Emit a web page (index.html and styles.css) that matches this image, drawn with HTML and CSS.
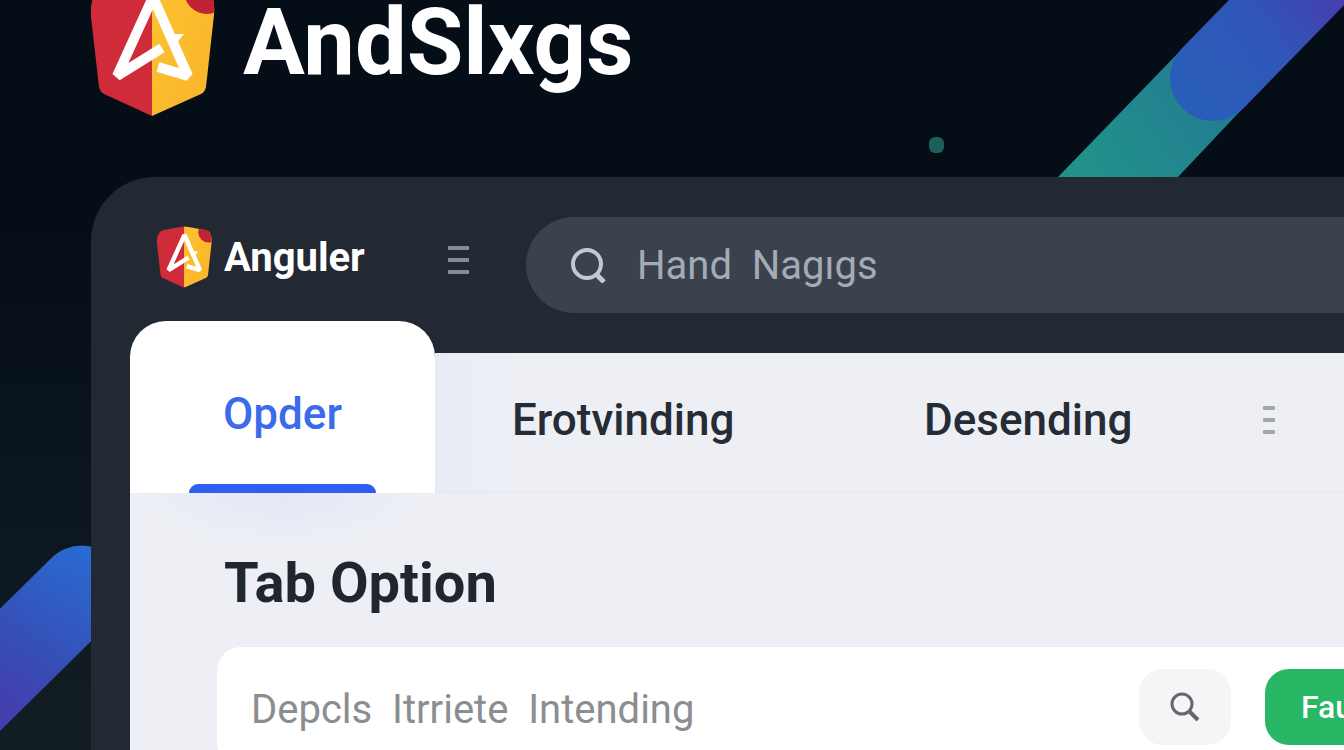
FILE: index.html
```html
<!DOCTYPE html>
<html lang="en">
<head>
  <meta charset="UTF-8" />
  <meta name="viewport" content="width=device-width, initial-scale=1" />
  <title>AndSlxgs</title>
  <link rel="stylesheet" href="styles.css">
</head>
<body>

  <!-- background ribbons -->
  <svg class="ribbons" viewBox="0 0 1344 750" preserveAspectRatio="xMidYMin slice" aria-hidden="true">
    <defs>
      <linearGradient id="teal" gradientUnits="userSpaceOnUse" x1="1090" y1="177" x2="1220" y2="90">
        <stop offset="0" stop-color="#21918a" />
        <stop offset="1" stop-color="#237c92" />
      </linearGradient>
      <linearGradient id="violet" gradientUnits="userSpaceOnUse" x1="1200" y1="100" x2="1345" y2="-10">
        <stop offset="0" stop-color="#2a5dba" />
        <stop offset="0.5" stop-color="#3056b8" />
        <stop offset="1" stop-color="#473cae" />
      </linearGradient>
      <linearGradient id="blue" gradientUnits="userSpaceOnUse" x1="90" y1="560" x2="0" y2="700">
        <stop offset="0" stop-color="#2a69cf" />
        <stop offset="0.6" stop-color="#3550b8" />
        <stop offset="1" stop-color="#433fae" />
      </linearGradient>
    </defs>
    <path d="M1010 227 L1058 177 L1183 48 L1243 108 L1178 177 L1130 227 Z" fill="url(#teal)" />
    <path d="M1213 78 L1363 -76" stroke="url(#violet)" stroke-width="86" stroke-linecap="round" />
    <path d="M82 589 L-60 729" stroke="url(#blue)" stroke-width="87" stroke-linecap="round" />
    <rect x="929" y="137" width="15" height="16" rx="6" fill="#1c5f5b" />
  </svg>

  <!-- shield logo, used twice -->
  <svg class="sprite" aria-hidden="true">
    <defs>
      <linearGradient id="gold" x1="0" y1="0" x2="1" y2="1">
        <stop offset="0" stop-color="#fcc42e" />
        <stop offset="1" stop-color="#f9b22c" />
      </linearGradient>
      <clipPath id="shield">
        <path d="M61 0 L111 9 Q118 11 121 19 Q124 27 123 38 L115 110 Q114 115 110 117 L61 139 L13 117 Q9 115 8 110 L0 40 Q-1 27 3 19 Q6 11 13 9 Z" />
      </clipPath>
    </defs>
    <symbol id="logo" viewBox="0 0 124 139">
      <g clip-path="url(#shield)">
        <rect width="61" height="139" fill="#cf2b38" />
        <rect x="61" width="63" height="139" fill="url(#gold)" />
        <circle cx="116" cy="14" r="23" fill="#c22233" />
      </g>
      <path d="M71 71 L26 99 L62 20 L97 99 L67 90" fill="none" stroke="#fff" stroke-width="10" stroke-linejoin="bevel" />
      <path d="M78 57 L93 57 L84 68 Z" fill="#fff" />
    </symbol>
  </svg>

  <header class="hero">
    <svg class="hero-logo"><use href="#logo" /></svg>
    <h1>AndSlxgs</h1>
  </header>

  <main class="window">
    <div class="topbar">
      <a class="brand" href="#">
        <svg class="brand-logo"><use href="#logo" /></svg>
        Anguler
      </a>
      <button class="menu-btn" type="button" aria-label="Menu">
        <span></span><span></span><span></span>
      </button>
      <label class="search">
        <svg viewBox="0 0 36 36" fill="none" stroke="currentColor" stroke-width="4" aria-hidden="true">
          <circle cx="17" cy="17" r="14" />
          <path d="M26 27 L34 35" stroke-width="5" />
        </svg>
        <input type="text" aria-label="Search" placeholder="Hand &nbsp;Nagıgs" />
      </label>
    </div>

    <nav class="tabs">
      <button class="tab active" type="button">Opder</button>
      <div class="tab-strip">
        <button class="tab" type="button">Erotvinding</button>
        <button class="tab" type="button">Desending</button>
        <button class="menu-btn small" type="button" aria-label="More tabs">
          <span></span><span></span><span></span>
        </button>
      </div>
    </nav>

    <section class="panel">
      <h2>Tab Option</h2>
      <form class="card">
        <input type="text" aria-label="Option" placeholder="Depcls &nbsp;Itrriete &nbsp;Intending" />
        <button class="icon-btn" type="button" aria-label="Find">
          <svg viewBox="0 0 30 30" fill="none" stroke="currentColor" stroke-width="3" aria-hidden="true">
            <circle cx="12" cy="12" r="10" />
            <path d="M19 19 L28 28" stroke-width="4" />
          </svg>
        </button>
        <button class="run-btn" type="button">Faur</button>
      </form>
    </section>
  </main>

</body>
</html>
```
FILE: styles.css
```css
* {
  box-sizing: border-box;
}
body {
  margin: 0;
  height: 100vh;
  overflow: hidden;
  position: relative;
  display: flex;
  flex-direction: column;
  font-family: Roboto, "Liberation Sans", sans-serif;
  background: linear-gradient(#050e17 30%, #121d24);
  color: #1f2630;
}
button,
input {
  font-family: inherit;
  border: none;
  background: none;
  padding: 0;
}
button {
  cursor: pointer;
}
.ribbons {
  position: absolute;
  inset: 0;
  width: 100%;
  height: 100%;
}
.sprite {
  position: absolute;
  width: 0;
  height: 0;
}

/* hero */
.hero {
  position: relative;
  display: flex;
  align-items: center;
  gap: 28px;
  height: 200px;
  margin-top: -23px;
  padding: 0 0 61px 91px;
  flex-shrink: 0;
}
.hero-logo {
  width: 124px;
  height: 139px;
}
h1 {
  margin: 0;
  padding-bottom: 8px;
  font-size: 92px;
  line-height: 112px;
  color: #fff;
}

/* window */
.window {
  position: relative;
  flex: 1 0 auto;
  margin-left: 91px;
  padding-left: 39px;
  border-radius: 64px 0 0 0;
  background: #222933;
}
.topbar {
  display: flex;
  align-items: center;
  height: 144px;
  padding: 32px 0 0 27px;
}
.brand {
  display: flex;
  align-items: center;
  gap: 12px;
  width: 291px;
  margin-top: -16px;
  color: #fff;
  font-size: 40px;
  font-weight: 700;
  text-decoration: none;
}
.brand-logo {
  width: 55px;
  height: 62px;
}
.menu-btn {
  display: flex;
  flex-direction: column;
  gap: 8px;
  width: 21px;
  margin: -10px 57px 0 0;
}
.menu-btn span {
  height: 4px;
  background: #858a93;
}
.search {
  flex: 1;
  display: flex;
  align-items: center;
  gap: 31px;
  height: 96px;
  padding-left: 44px;
  border-radius: 48px 0 0 48px;
  background: #3a424d;
  color: #c3c8d1;
}
.search svg {
  width: 36px;
  height: 36px;
}
.search input {
  flex: 1;
  font-size: 40px;
  color: #c3c8d1;
}
.search input::placeholder {
  color: #a5abb5;
  opacity: 1;
}

/* tabs */
.tabs {
  display: flex;
  align-items: flex-end;
}
.tab {
  font-size: 44px;
  font-weight: 500;
  color: #262c36;
}
.tab.active {
  position: relative;
  width: 305px;
  height: 172px;
  padding-top: 14px;
  border-radius: 36px 36px 0 0;
  background: #fff;
  color: #3b6bec;
}
.tab.active::after {
  content: "";
  position: absolute;
  left: 59px;
  right: 59px;
  bottom: 0;
  height: 9px;
  border-radius: 10px 10px 0 0;
  background: #2f5ef0;
}
.tab-strip {
  flex: 1;
  display: flex;
  align-items: center;
  height: 140px;
  padding: 0 0 5px 77px;
  border-bottom: 1px solid #e3e6eb;
  background: linear-gradient(90deg, #e9ecf7, #edeff5 80px);
}
.tab-strip .tab {
  width: 412px;
  text-align: left;
}
.tab-strip .tab:nth-child(2) {
  width: 339px;
}
.menu-btn.small {
  width: 12px;
  margin: 0;
}
.menu-btn.small span {
  height: 4px;
  border-radius: 1px;
  background: #a3a6ab;
}

/* panel */
.panel {
  min-height: 257px;
  padding: 58px 0 0 87px;
  overflow: hidden;
  background: radial-gradient(ellipse 140px 50px at 152px 0, #e4e7f7, transparent), #edeff5;
}
h2 {
  margin: 0 0 32px 7px;
  font-size: 56px;
  line-height: 64px;
}
.card {
  display: flex;
  align-items: center;
  height: 120px;
  margin-right: -123px;
  padding: 22px 22px 22px 34px;
  border-radius: 24px;
  background: #fff;
}
.card input {
  flex: 1;
  padding-top: 4px;
  font-size: 40px;
}
.card input::placeholder {
  color: #8b8d90;
  opacity: 1;
}
.icon-btn {
  width: 92px;
  height: 76px;
  margin-right: 34px;
  border-radius: 24px;
  background: #f4f5f7;
  color: #65676b;
}
.icon-btn svg {
  width: 30px;
  height: 30px;
  vertical-align: middle;
}
.run-btn {
  width: 180px;
  height: 76px;
  padding-left: 36px;
  border-radius: 24px;
  background: #29b765;
  color: #fff;
  font-size: 32px;
  font-weight: 500;
  text-align: left;
}
```
